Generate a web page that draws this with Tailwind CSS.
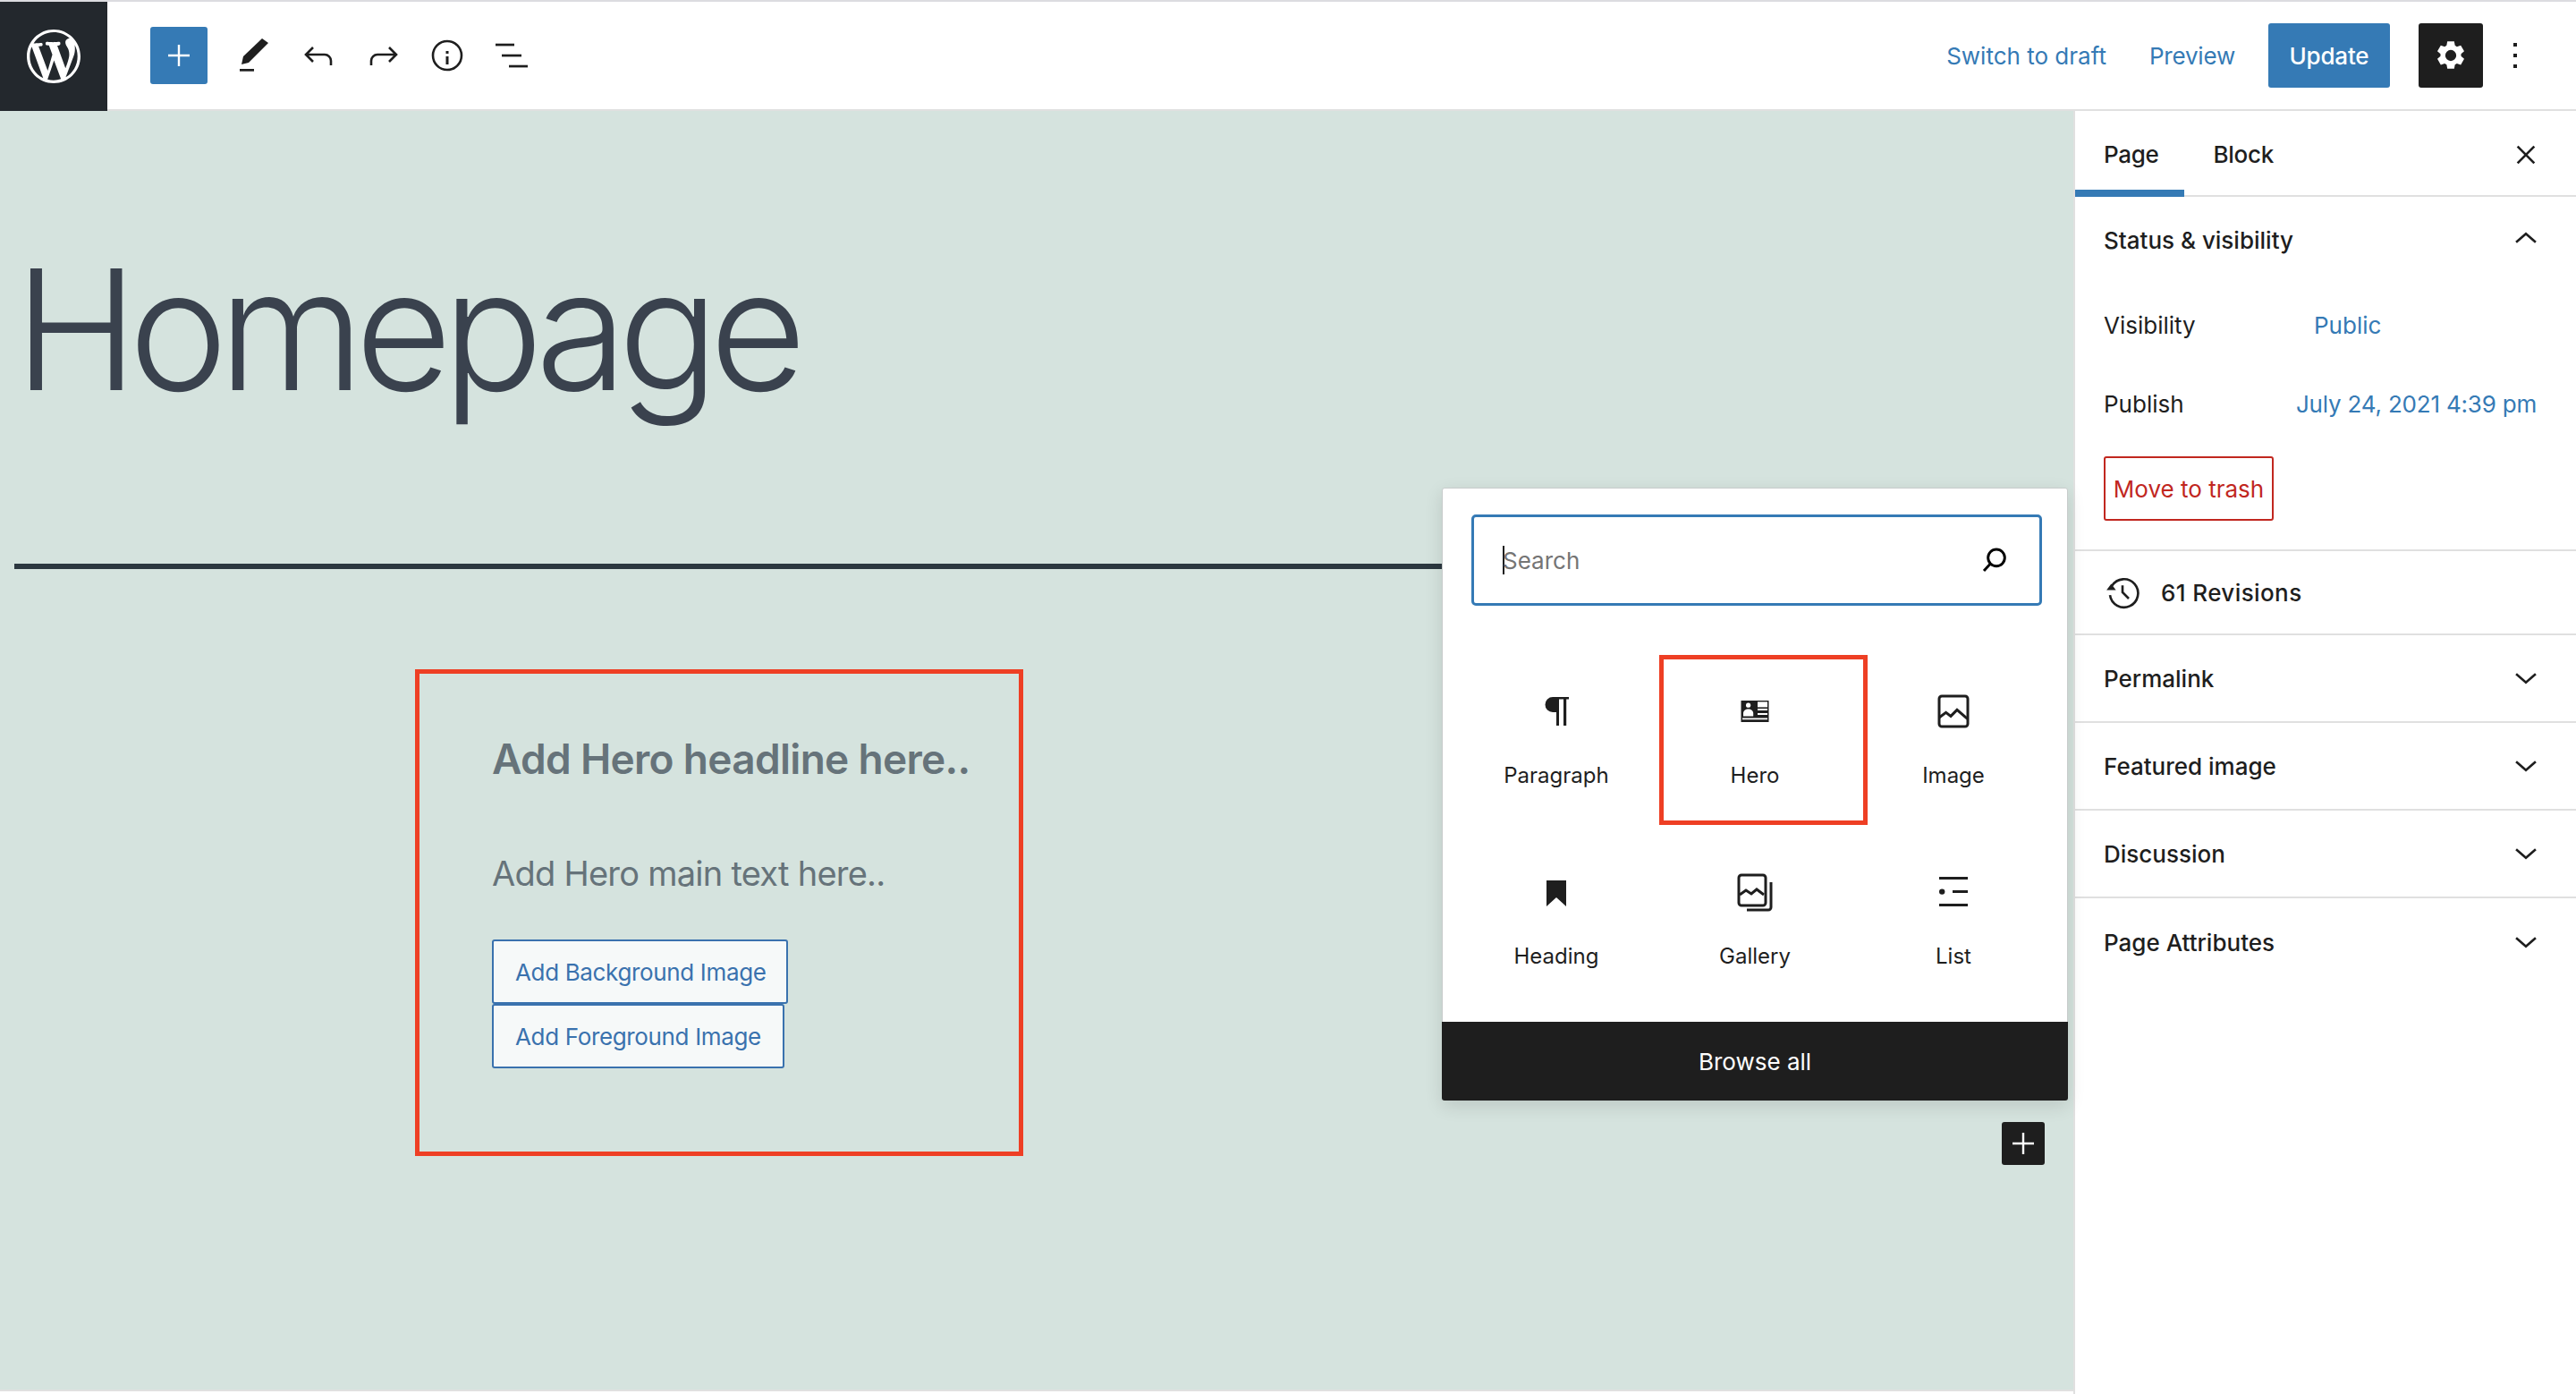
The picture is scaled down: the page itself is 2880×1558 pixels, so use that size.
<!doctype html>
<html>
<head>
<meta charset="utf-8">
<title>Homepage</title>
<script src="https://cdn.jsdelivr.net/npm/@tailwindcss/browser@4"></script>
</head>
<body class="font-['Inter',sans-serif] text-[#1e1e1e] bg-white">
<div class="w-[2880px] h-[1558px] flex flex-col overflow-hidden border-t-2 border-[#dcdce0]">

  <!-- top bar -->
  <header class="h-[122px] shrink-0 flex items-center border-b-2 border-[#e0e0e0]">
    <div class="w-[120px] h-[122px] -mb-[2px] bg-[#23282d] flex items-center justify-center">
      <svg class="w-[60px] h-[60px]" viewBox="0 0 20 20" fill="#fff"><path d="M20 10c0-5.51-4.49-10-10-10C4.480 0 0 4.490 0 10c0 5.520 4.480 10 10 10 5.510 0 10-4.480 10-10zM7.780 15.370L4.370 6.220c.55-.02 1.170-.08 1.170-.08.500-.06.440-1.130-.060-1.110 0 0-1.450.110-2.370.110-.180 0-.370 0-.580-.010C4.120 2.690 6.910 1.020 10 1.020c2.300 0 4.390.870 5.970 2.300-.660-.110-1.600.380-1.600 1.540 0 .720.430 1.320.880 2.050.360.610.560 1.360.560 2.470 0 1.500-1.410 5.030-1.410 5.030l-3.060-8.430c.540-.020.820-.170.820-.170.500-.050.440-1.250-.060-1.220 0 0-1.440.120-2.380.120-.870 0-2.330-.120-2.330-.120-.500-.030-.560 1.200-.060 1.220l.920.080 1.260 3.410zM17.410 10c.240-.640.740-1.870.430-4.250.700 1.290 1.050 2.710 1.050 4.250 0 3.290-1.730 6.240-4.400 7.780.970-2.590 1.940-5.200 2.920-7.780zM6.100 18.090C3.120 16.650 1.110 13.530 1.110 10c0-1.300.230-2.480.720-3.590C3.250 10.300 4.670 14.200 6.100 18.090zm4.030-6.630l2.580 6.980c-.860.290-1.750.450-2.710.450-.790 0-1.570-.110-2.290-.330.810-2.380 1.620-4.740 2.420-7.100z"/></svg>
    </div>
    <div class="ml-[48px] w-[64px] h-[64px] rounded-[3px] bg-[#357ab5] flex items-center justify-center">
      <svg class="w-[24px] h-[24px]" viewBox="0 0 24 24" fill="none" stroke="#fff" stroke-width="2.400"><path d="M12 0v24M0 12h24"/></svg>
    </div>
    <svg class="ml-[30px] w-[48px] h-[48px]" viewBox="0 0 48 48" fill="#1e1e1e"><path d="M31 5l7 5-22 22-8 2 2-9z"/><rect x="6" y="39" width="16" height="2.700"/></svg>
    <svg class="ml-[23px] w-[48px] h-[48px]" viewBox="0 0 48 48" fill="none" stroke="#1e1e1e" stroke-width="2.600"><path d="M17 15 9 23l8 8M9 23h21a7 7 0 0 1 7 7v5"/></svg>
    <svg class="ml-[23px] w-[48px] h-[48px]" viewBox="0 0 48 48" fill="none" stroke="#1e1e1e" stroke-width="2.600"><path d="M31 15l8 8-8 8M39 23H18a7 7 0 0 0-7 7v5"/></svg>
    <svg class="ml-[24px] w-[48px] h-[48px]" viewBox="0 0 48 48" fill="#1e1e1e"><circle cx="24" cy="24" r="16" fill="none" stroke="#1e1e1e" stroke-width="2.600"/><rect x="22.500" y="19" width="3" height="3"/><rect x="22.500" y="25" width="3" height="9"/></svg>
    <svg class="ml-[24px] w-[48px] h-[48px]" viewBox="0 0 48 48" fill="#1e1e1e"><rect x="6" y="10.700" width="21" height="2.700"/><rect x="13" y="22.700" width="22" height="2.700"/><rect x="21" y="34.700" width="21" height="2.700"/></svg>

    <div class="ml-auto flex items-center text-[26px] text-[#357ab5]">
      <span>Switch to draft</span>
      <span class="ml-[48px] tracking-[-0.2px]">Preview</span>
      <span class="ml-[37px] w-[136px] h-[72px] rounded-[3px] bg-[#357ab5] text-white flex items-center justify-center font-medium tracking-[-0.2px]">Update</span>
      <span class="ml-[32px] w-[72px] h-[72px] rounded-[3px] bg-[#1e1e1e] flex items-center justify-center">
        <svg class="w-[40px] h-[40px]" viewBox="0 0 24 24" fill="#fff"><path d="M14.300 2.600l.5 2.700 1.300.8 2.600-.9 2.300 4-2.100 1.800v1.500l2.100 1.800-2.300 4-2.600-.9-1.300.8-.5 2.700H9.700l-.5-2.700-1.300-.8-2.600.9-2.300-4 2.100-1.800V11l-2.100-1.800 2.300-4 2.600.9 1.300-.8.500-2.700zM12 8.300a3.700 3.700 0 1 0 0 7.400 3.700 3.700 0 0 0 0-7.400z" fill-rule="evenodd"/></svg>
      </span>
      <span class="ml-[16px] mr-[48px] w-[40px] flex flex-col items-center gap-[8px]">
        <i class="block w-[4px] h-[4px] bg-[#1e1e1e]"></i><i class="block w-[4px] h-[4px] bg-[#1e1e1e]"></i><i class="block w-[4px] h-[4px] bg-[#1e1e1e]"></i>
      </span>
    </div>
  </header>

  <div class="flex flex-1 min-h-0 items-start">
    <!-- canvas -->
    <main class="relative shrink-0 w-[2318px] h-[1431px] bg-[#d5e3de] border-b-2 border-[#e0e0e0] pt-[134px]">
      <h1 class="pl-[16px] text-[187px] leading-[220px] font-light tracking-[-10.5px] text-[#3a424e]">Homepage</h1>
      <div class="ml-[16px] mt-[152px] w-[1600px] h-[6px] bg-[#2c3840]"></div>

      <section class="ml-[464px] mt-[112px] w-[680px] h-[544px] border-[5px] border-[#ee3f24] pl-[81px] pt-[67px]">
        <p class="text-[46px] leading-[56px] font-semibold tracking-[-0.7px] text-[#66737a]">Add Hero headline here..</p>
        <p class="mt-[77px] text-[38px] leading-[46px] tracking-[-0.75px] text-[#66737a]">Add Hero main text here..</p>
        <div class="mt-[51px] flex flex-col items-start text-[26px] tracking-[-0.35px] text-[#3a72ae]">
          <span class="w-[331px] h-[72px] rounded-[3px] border-2 border-[#3a72ae] bg-[#f6f9f9] pl-[24px] flex items-center">Add Background Image</span>
          <span class="w-[327px] h-[72px] rounded-[3px] border-2 border-[#3a72ae] bg-[#f6f9f9] pl-[24px] flex items-center">Add Foreground Image</span>
        </div>
      </section>

      <!-- block inserter popover -->
      <div class="absolute left-[1612px] top-[421px] w-[700px] h-[685px] rounded-[3px] bg-white border border-[#c8cccc] shadow-[0_6px_20px_rgba(0,0,0,0.12)] flex flex-col">
        <div class="ml-[32px] mr-[28px] mt-[29px] h-[102px] rounded-[5px] border-[3px] border-[#357ab5] flex items-center pl-[32px] pr-[34px] text-[26px] text-[#757575]">
          <span class="w-[2px] h-[32px] -mr-[2px] bg-[#1e1e1e]"></span>
          <span>Search</span>
          <svg class="ml-auto w-[32px] h-[32px]" viewBox="0 0 24 24" fill="none" stroke="#000" stroke-width="2.200"><circle cx="13.500" cy="10" r="7"/><path d="M8.500 15 3 21"/></svg>
        </div>
        <div class="mt-[56px] mx-[16px] grid grid-cols-3 grid-rows-2 h-[408px] text-[24px]">
          <div class="flex flex-col items-center">
            <svg class="mt-[38px] w-[48px] h-[48px]" viewBox="0 0 24 24" fill="#1e1e1e"><path d="M10 4h9v1.300h-1.400V20H16V5.300h-2.500V20H12v-7.500h-2a4.250 4.250 0 0 1 0-8.500z"/></svg>
            <span class="mt-[30px]">Paragraph</span>
          </div>
          <div class="flex flex-col items-center">
            <svg class="mt-[38px] w-[48px] h-[48px]" viewBox="0 0 24 24"><rect x="4.250" y="6" width="15.500" height="12" fill="#1e1e1e"/><rect x="13.500" y="6.700" width="5.500" height="3" fill="#fff"/><path d="M13.500 11h5.500M13.500 13.500h5.500M5 16.200h14" stroke="#fff" stroke-width=".9"/><circle cx="8.300" cy="8.600" r="1.300" fill="#fff"/><path d="M5.500 14.800v-1.800c0-1.300 1.300-2.300 2.800-2.300s2.800 1 2.800 2.300v1.800z" fill="#fff"/></svg>
            <span class="mt-[30px]">Hero</span>
          </div>
          <div class="flex flex-col items-center">
            <svg class="mt-[38px] w-[48px] h-[48px]" viewBox="0 0 24 24" fill="none" stroke="#1e1e1e" stroke-width="1.500"><rect x="4" y="3.500" width="16" height="17" rx="1.500"/><path d="M4 15.500l3.800-2.800 2.700 2 3.500-3.500 5.800 5"/></svg>
            <span class="mt-[30px]">Image</span>
          </div>
          <div class="flex flex-col items-center">
            <svg class="mt-[36px] w-[48px] h-[48px]" viewBox="0 0 24 24" fill="#1e1e1e"><path d="M6.500 5.500h11v14.500l-5.500-5-5.500 5z"/></svg>
            <span class="mt-[30px]">Heading</span>
          </div>
          <div class="flex flex-col items-center">
            <svg class="mt-[36px] w-[48px] h-[48px]" viewBox="0 0 24 24" fill="none" stroke="#1e1e1e" stroke-width="1.500"><rect x="3" y="2.500" width="15" height="17" rx="1.500"/><path d="M3.500 13.500l3.500-2.500 3 2 3-2.500 4 3M21 6.500v14a1.500 1.500 0 0 1-1.500 1.500H7.500"/></svg>
            <span class="mt-[30px]">Gallery</span>
          </div>
          <div class="flex flex-col items-center">
            <svg class="mt-[36px] w-[48px] h-[48px]" viewBox="0 0 24 24" fill="#1e1e1e"><rect x="4" y="3.500" width="16" height="1.500"/><circle cx="5.600" cy="11.800" r="1.600"/><rect x="11.500" y="11" width="8.500" height="1.500"/><rect x="4" y="18.500" width="16" height="1.500"/></svg>
            <span class="mt-[30px]">List</span>
          </div>
        </div>
        <div class="mt-auto -mx-px -mb-px h-[88px] rounded-b-[3px] bg-[#1e1e1e] text-white text-[26px] flex items-center justify-center">Browse all</div>
      </div>

      <!-- highlight round the Hero block -->
      <div class="absolute left-[1855px] top-[608px] w-[233px] h-[190px] border-[5px] border-[#ee3f24]"></div>

      <div class="absolute left-[2238px] top-[1130px] w-[48px] h-[48px] rounded-[3px] bg-[#1e1e1e] flex items-center justify-center">
        <svg class="w-[24px] h-[24px]" viewBox="0 0 24 24" fill="none" stroke="#fff" stroke-width="2.400"><path d="M12 0v24M0 12h24"/></svg>
      </div>
    </main>

    <!-- settings sidebar -->
    <aside class="shrink-0 w-[562px] h-[1434px] border-l-2 border-[#e0e0e0] text-[26px]">
      <div class="relative h-[96px] flex items-center border-b-2 border-[#e0e0e0] pl-[32px] font-medium tracking-[-0.3px]">
        <span class="pt-[2px]">Page</span>
        <span class="ml-[61px] pt-[2px]">Block</span>
        <svg class="absolute right-[40px] top-[33px] w-[32px] h-[32px]" viewBox="0 0 24 24" fill="none" stroke="#1e1e1e" stroke-width="2"><path d="M5 5l14 14M19 5 5 19"/></svg>
        <div class="absolute left-0 -bottom-[2px] w-[122px] h-[8px] bg-[#357ab5]"></div>
      </div>

      <div class="h-[396px] border-b-2 border-[#e0e0e0] pl-[32px] pr-[40px]">
        <div class="h-[97px] flex items-center justify-between font-medium">
          <span>Status &amp; visibility</span>
          <svg class="w-[32px] h-[32px] -mt-[6px]" viewBox="0 0 24 24" fill="none" stroke="#1e1e1e" stroke-width="2"><path d="M3.800 15.500 12 8.500l8.200 7"/></svg>
        </div>
        <div class="mt-[30px] flex items-center h-[32px]">
          <span class="w-[235px]">Visibility</span>
          <span class="text-[#357ab5]">Public</span>
        </div>
        <div class="mt-[56px] flex items-center justify-between h-[32px]">
          <span>Publish</span>
          <span class="mr-[4px] tracking-[-0.2px] text-[#357ab5]">July 24, 2021 4:39 pm</span>
        </div>
        <div class="mt-[43px] w-[190px] h-[72px] rounded-[3px] border-2 border-[#c1271f] text-[#c1271f] flex items-center justify-center">Move to trash</div>
      </div>

      <div class="h-[94px] border-b-2 border-[#e0e0e0] pl-[32px] flex items-center font-medium">
        <svg class="w-[42px] h-[42px]" viewBox="0 0 24 24" fill="none" stroke="#1e1e1e" stroke-width="1.500"><path d="M5.300 7.800a9 9 0 1 1-1.300 6"/><path d="M12 7.500V12l4 4"/><path d="M1.800 10.500h6l-3-4z" fill="#1e1e1e" stroke="none"/></svg>
        <span class="ml-[22px] tracking-[0.4px]">61 Revisions</span>
      </div>

      <div class="h-[98px] border-b-2 border-[#e0e0e0] pl-[32px] pr-[40px] flex items-center justify-between font-medium">
        <span>Permalink</span>
        <svg class="w-[32px] h-[32px]" viewBox="0 0 24 24" fill="none" stroke="#1e1e1e" stroke-width="2"><path d="M3.800 8.500 12 15.500l8.200-7"/></svg>
      </div>
      <div class="h-[98px] border-b-2 border-[#e0e0e0] pl-[32px] pr-[40px] flex items-center justify-between font-medium">
        <span>Featured image</span>
        <svg class="w-[32px] h-[32px]" viewBox="0 0 24 24" fill="none" stroke="#1e1e1e" stroke-width="2"><path d="M3.800 8.500 12 15.500l8.200-7"/></svg>
      </div>
      <div class="h-[98px] border-b-2 border-[#e0e0e0] pl-[32px] pr-[40px] flex items-center justify-between font-medium">
        <span>Discussion</span>
        <svg class="w-[32px] h-[32px]" viewBox="0 0 24 24" fill="none" stroke="#1e1e1e" stroke-width="2"><path d="M3.800 8.500 12 15.500l8.200-7"/></svg>
      </div>
      <div class="h-[98px] pl-[32px] pr-[40px] flex items-center justify-between font-medium">
        <span>Page Attributes</span>
        <svg class="w-[32px] h-[32px]" viewBox="0 0 24 24" fill="none" stroke="#1e1e1e" stroke-width="2"><path d="M3.800 8.500 12 15.500l8.200-7"/></svg>
      </div>
    </aside>
  </div>
</div>
</body>
</html>
